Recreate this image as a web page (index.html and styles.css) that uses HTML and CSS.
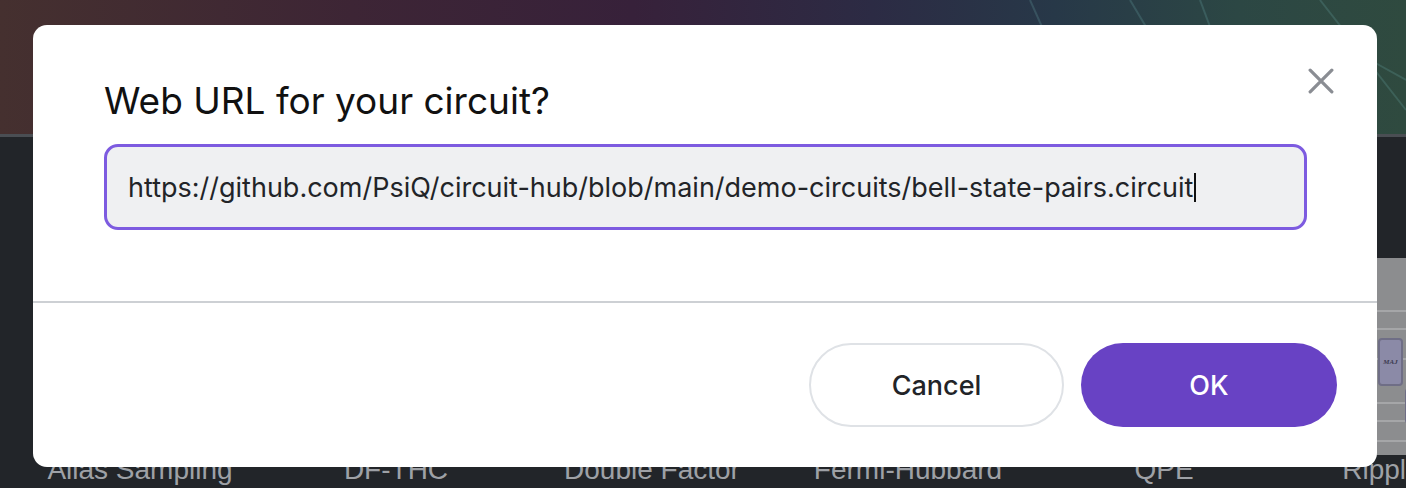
FILE: index.html
```html
<!DOCTYPE html>
<html lang="en">
<head>
<meta charset="utf-8">
<title>Web URL for your circuit?</title>
<link rel="stylesheet" href="styles.css">
</head>
<body>
<div class="page">
  <header class="hero">
    <svg class="hero-lines" viewBox="0 0 1406 134" preserveAspectRatio="none">
      <path d="M1030 0 L1090 134" />
      <path d="M1130 0 L1210 134" />
      <path d="M1200 0 L1250 134" />
      <path d="M1320 0 L1406 110" />
      <path d="M1370 60 L1406 80" />
    </svg>
  </header>
  <div class="rule"></div>
  <main class="gallery">
    <div class="card"><div class="thumb"></div><div class="label">Alias Sampling</div></div>
    <div class="card"><div class="thumb"></div><div class="label">DF-THC</div></div>
    <div class="card"><div class="thumb"></div><div class="label">Double Factor</div></div>
    <div class="card"><div class="thumb"></div><div class="label">Fermi-Hubbard</div></div>
    <div class="card"><div class="thumb"></div><div class="label">QPE</div></div>
    <div class="card"><div class="thumb"><span class="gate maj">MAJ</span><span class="gate gate2"></span></div><div class="label">Ripple Carry</div></div>
  </main>
</div>

<div class="dialog" role="dialog" aria-labelledby="dlg-title">
  <div class="dialog-body">
    <h2 class="dialog-title" id="dlg-title">Web URL for your circuit?</h2>
    <div class="url-field">https://github.com/PsiQ/circuit-hub/blob/main/demo-circuits/bell-state-pairs.circuit<span class="caret"></span></div>
    <button class="close" aria-label="Close">
      <svg viewBox="0 0 24 24" width="26" height="26"><path d="M2 2 L22 22 M22 2 L2 22"/></svg>
    </button>
  </div>
  <div class="dialog-footer">
    <button class="btn btn-cancel">Cancel</button>
    <button class="btn btn-ok">OK</button>
  </div>
</div>
</body>
</html>
```

FILE: styles.css
```css
* { box-sizing: border-box; }

html, body {
  margin: 0;
  padding: 0;
  width: 1406px;
  height: 488px;
  overflow: hidden;
  background: #222529;
  font-family: Inter, "Liberation Sans", Arial, sans-serif;
}

.page {
  position: relative;
  width: 1406px;
  height: 488px;
  overflow: hidden;
}

.hero {
  height: 134px;
  background: linear-gradient(90deg, #45302f 0%, #3d2535 25%, #37213a 45%, #2c2b44 62%, #273848 75%, #2c4744 88%, #2f4a3f 100%);
  overflow: hidden;
}

.hero-lines {
  display: block;
  width: 100%;
  height: 100%;
}

.hero-lines path {
  stroke: rgba(120, 190, 190, 0.2);
  stroke-width: 2;
  fill: none;
}

.rule {
  height: 3px;
  background: #4a4e53;
}

.gallery {
  display: grid;
  grid-template-columns: repeat(6, 200px);
  column-gap: 56px;
  padding: 121px 0 0 40px;
  width: 1700px;
}

.card {
  display: flex;
  flex-direction: column;
  align-items: center;
}

.thumb {
  position: relative;
  width: 200px;
  height: 197px;
  background-color: #8c8d8f;
  background-image:
    linear-gradient(#a5a6a8, #a5a6a8),
    linear-gradient(#a5a6a8, #a5a6a8),
    linear-gradient(#a5a6a8, #a5a6a8),
    linear-gradient(#a5a6a8, #a5a6a8),
    linear-gradient(#a5a6a8, #a5a6a8),
    linear-gradient(#a5a6a8, #a5a6a8);
  background-size: 100% 2px;
  background-repeat: no-repeat;
  background-position: 0 52px, 0 70px, 0 100px, 0 144px, 0 162px, 0 182px;
}

.gate {
  position: absolute;
  border: 2px solid #6f6e86;
  border-radius: 4px;
  background: #8b8aa7;
}

.maj {
  left: 58px;
  top: 80px;
  width: 25px;
  height: 48px;
  display: flex;
  align-items: center;
  justify-content: center;
  font-family: "Liberation Serif", serif;
  font-style: italic;
  font-weight: 700;
  font-size: 7px;
  color: #3c3b50;
}

.gate2 {
  left: 85px;
  top: 130px;
  width: 25px;
  height: 36px;
}

.label {
  margin-top: 0;
  font-family: "Liberation Sans", Arial, sans-serif;
  font-size: 28px;
  line-height: 30px;
  color: #9ea1a6;
  white-space: nowrap;
}

/* Dialog */
.dialog {
  position: absolute;
  left: 33px;
  top: 25px;
  width: 1344px;
  height: 442px;
  background: #ffffff;
  border-radius: 14px;
  display: flex;
  flex-direction: column;
}

.dialog-body {
  position: relative;
  height: 278px;
  padding: 54px 70px 0 71px;
  border-bottom: 2px solid #cdd0d4;
}

.dialog-title {
  margin: 0;
  font-size: 37px;
  line-height: 44px;
  font-weight: 400;
  color: #111111;
  letter-spacing: 0;
}

.url-field {
  margin-top: 21px;
  height: 86px;
  border: 3px solid #7d5be0;
  border-radius: 14px;
  background: #eff0f2;
  padding: 0 18px 0 21px;
  display: flex;
  align-items: center;
  font-size: 27px;
  color: #222428;
  white-space: nowrap;
  overflow: hidden;
}

.caret {
  display: inline-block;
  width: 2px;
  height: 29px;
  margin-left: 1px;
  background: #111;
}

.close {
  position: absolute;
  left: 1275px;
  top: 43px;
  width: 26px;
  height: 26px;
  padding: 0;
  border: 0;
  background: transparent;
  cursor: pointer;
}

.close svg {
  display: block;
}

.close path {
  stroke: #8a8d93;
  stroke-width: 3;
  stroke-linecap: round;
  fill: none;
}

.dialog-footer {
  flex: 1;
  display: flex;
  justify-content: flex-end;
  align-items: center;
  gap: 17px;
  padding-right: 40px;
}

.btn {
  width: 255px;
  height: 84px;
  border-radius: 42px;
  font-family: Inter, "Liberation Sans", Arial, sans-serif;
  font-size: 27px;
  font-weight: 500;
  cursor: pointer;
}

.btn-cancel {
  background: #ffffff;
  border: 2px solid #dfe2e6;
  color: #222428;
}

.btn-ok {
  width: 256px;
  background: #6842c4;
  border: 0;
  color: #ffffff;
}
```
